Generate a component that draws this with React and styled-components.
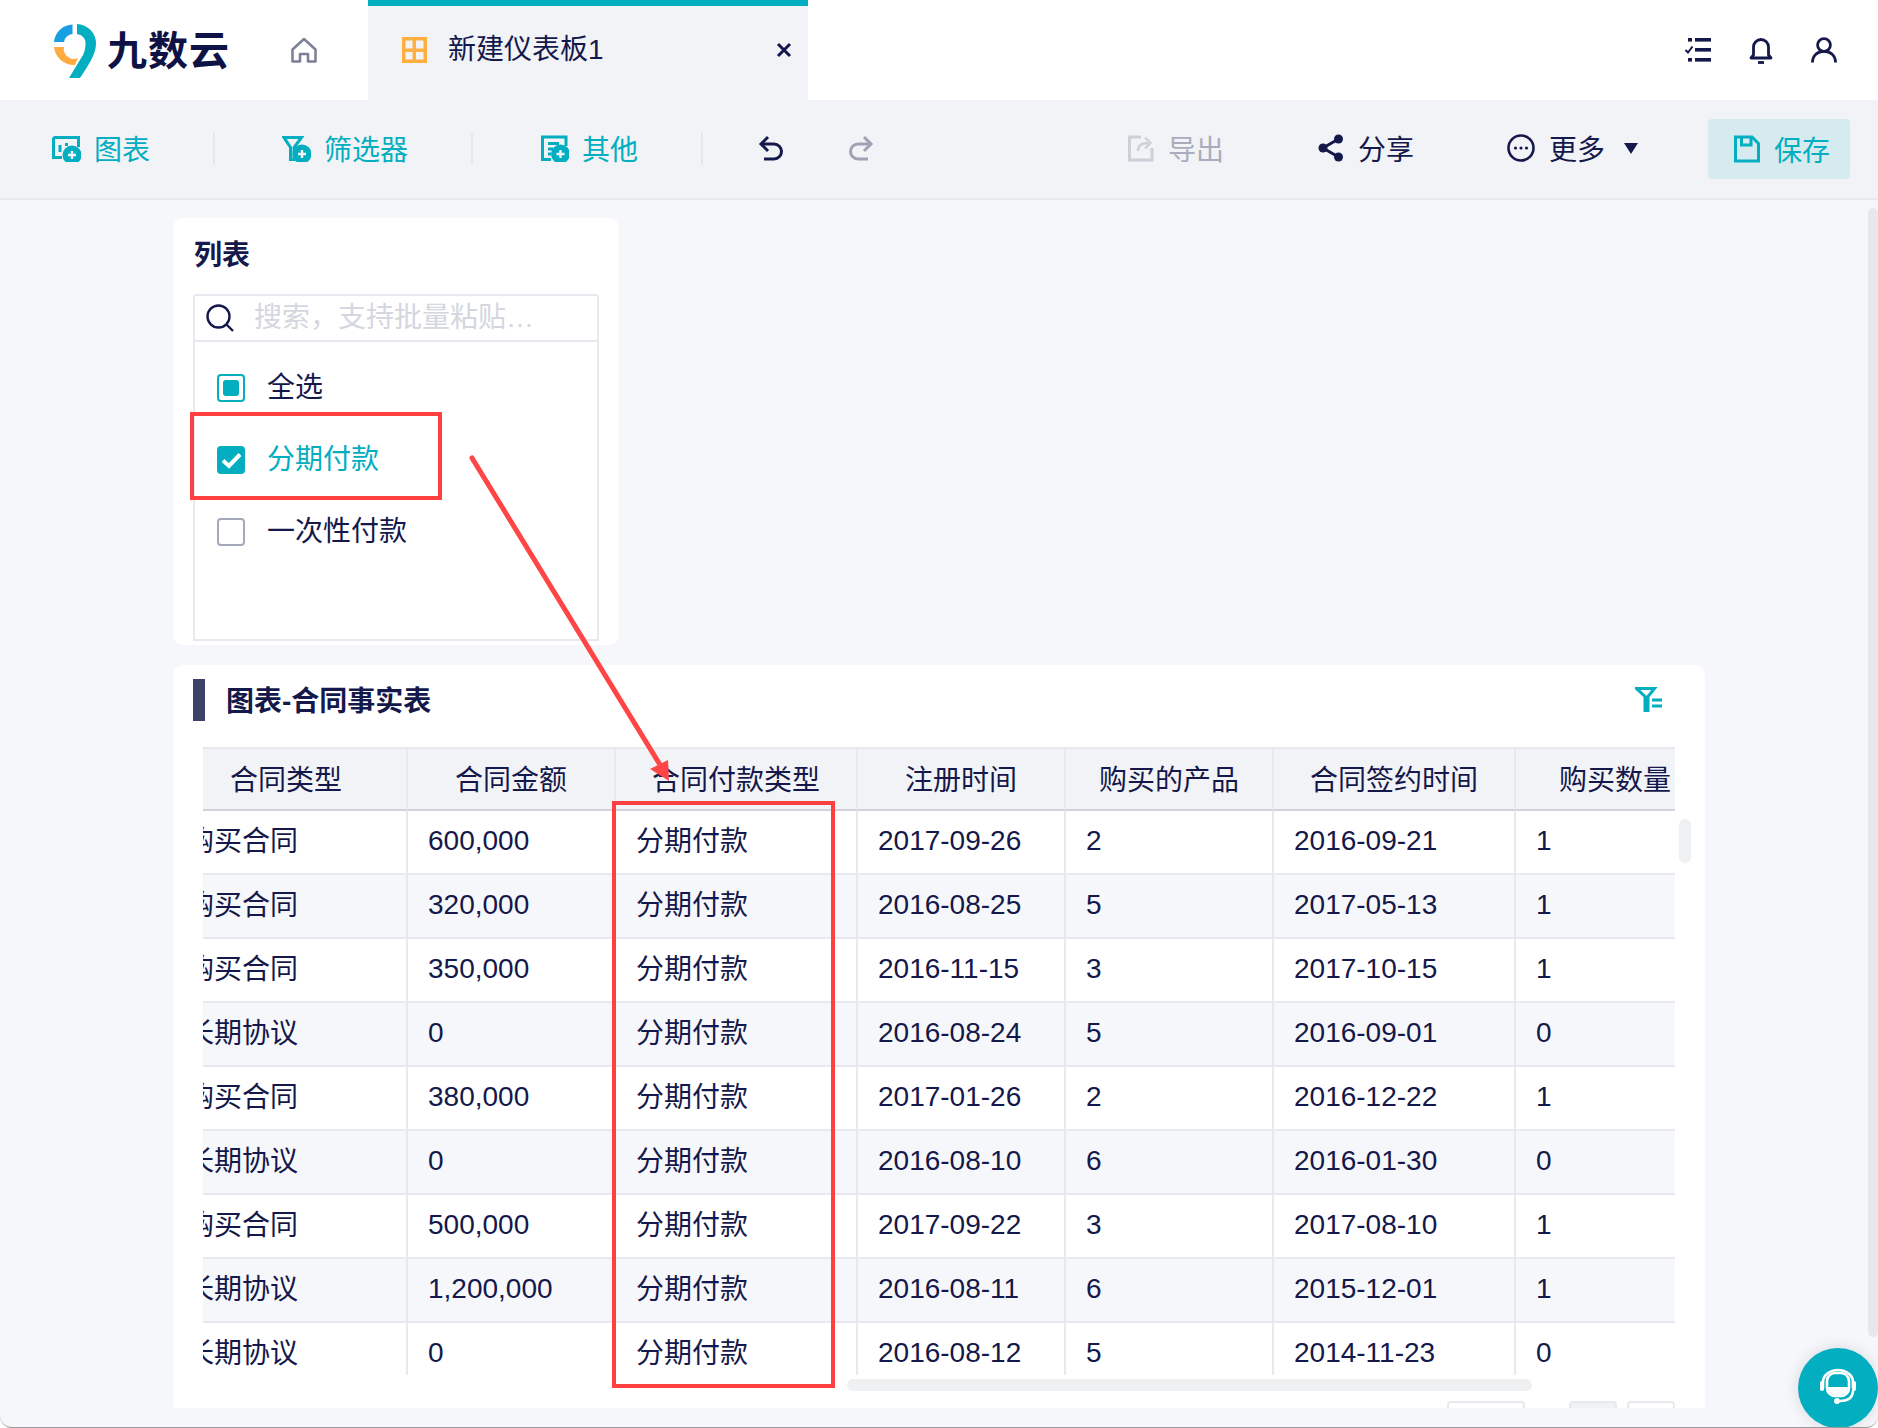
import React from "react";
import styled, { createGlobalStyle } from "styled-components";

const NAVY = "#14184a";
const TEAL = "#02aec0";
const LINE = "#e8e9ee";

const rows = [
  ["购买合同", "600,000", "2017-09-26", "2", "2016-09-21", "1"],
  ["购买合同", "320,000", "2016-08-25", "5", "2017-05-13", "1"],
  ["购买合同", "350,000", "2016-11-15", "3", "2017-10-15", "1"],
  ["长期协议", "0", "2016-08-24", "5", "2016-09-01", "0"],
  ["购买合同", "380,000", "2017-01-26", "2", "2016-12-22", "1"],
  ["长期协议", "0", "2016-08-10", "6", "2016-01-30", "0"],
  ["购买合同", "500,000", "2017-09-22", "3", "2017-08-10", "1"],
  ["长期协议", "1,200,000", "2016-08-11", "6", "2015-12-01", "1"],
  ["长期协议", "0", "2016-08-12", "5", "2014-11-23", "0"],
];

const columns = [
  { title: "合同类型", width: 242 },
  { title: "合同金额", width: 208 },
  { title: "合同付款类型", width: 242 },
  { title: "注册时间", width: 208 },
  { title: "购买的产品", width: 208 },
  { title: "合同签约时间", width: 242 },
  { title: "购买数量", width: 200 },
];

const Plus = ({ cx, cy }) => (
  <>
    <circle cx={cx} cy={cy} r="8" fill="currentColor" />
    <path d={`M${cx - 4} ${cy}H${cx + 4}M${cx} ${cy - 4}V${cy + 4}`} stroke="#f2f3f7" strokeWidth="2.4" fill="none" />
  </>
);

const ChartIcon = () => (
  <svg width="29" height="28" viewBox="0 0 29 28" fill="none" stroke="currentColor" strokeWidth="3">
    <path d="M1.5 3.5H26.5V13M1.5 3.5V23.5H10" />
    <path d="M8 11V18M14.5 9V12" />
    <Plus cx={20} cy={21} />
  </svg>
);

const FilterIcon = () => (
  <svg width="29" height="28" viewBox="0 0 29 28" fill="none" stroke="currentColor" strokeWidth="3">
    <path d="M2 3.5H19.5L12 13.5V25.5H8.5V13.5Z" />
    <Plus cx={20} cy={20} />
  </svg>
);

const OtherIcon = () => (
  <svg width="28" height="28" viewBox="0 0 28 28" fill="none" stroke="currentColor" strokeWidth="3">
    <path d="M25 12V3H1.5V25.5H10" />
    <path d="M7 9.5H18M7 15H12M7 20H10" />
    <Plus cx={19.5} cy={20} />
  </svg>
);

const UndoIcon = () => (
  <svg width="26" height="28" viewBox="0 0 26 28" fill="none" stroke="currentColor" strokeWidth="3">
    <path d="M10 3L3 10L10 17" />
    <path d="M3 10H16A7.5 7.5 0 0 1 16 25H6" />
  </svg>
);

const RedoIcon = () => (
  <svg width="26" height="28" viewBox="0 0 26 28" fill="none" stroke="currentColor" strokeWidth="3">
    <path d="M16 3L23 10L16 17" />
    <path d="M23 10H10A7.5 7.5 0 0 0 10 25H20" />
  </svg>
);

const ExportIcon = () => (
  <svg width="26" height="28" viewBox="0 0 26 28" fill="none" stroke="currentColor" strokeWidth="3">
    <path d="M13 3H1.5V26H24V14" />
    <path d="M10 17C10 12 13 9 20 9M17 3.5L22.5 9L17 14.5" strokeWidth="2.4" />
  </svg>
);

const ShareIcon = () => (
  <svg width="26" height="28" viewBox="0 0 26 28" fill="currentColor">
    <circle cx="20.5" cy="5" r="4.5" />
    <circle cx="5" cy="14" r="4.5" />
    <circle cx="20.5" cy="23" r="4.5" />
    <path d="M20.5 5L5 14L20.5 23" fill="none" stroke="currentColor" strokeWidth="3" />
  </svg>
);

const MoreIcon = () => (
  <svg width="28" height="28" viewBox="0 0 28 28" fill="currentColor">
    <circle cx="14" cy="14" r="12.5" fill="none" stroke="currentColor" strokeWidth="2.6" />
    <circle cx="8.5" cy="14" r="1.6" />
    <circle cx="14" cy="14" r="1.6" />
    <circle cx="19.5" cy="14" r="1.6" />
  </svg>
);

const SaveIcon = () => (
  <svg width="26" height="28" viewBox="0 0 26 28" fill="none" stroke="currentColor" strokeWidth="3">
    <path d="M1.5 2H18L24.5 8.5V26H1.5Z" />
    <path d="M7.5 2V10H17V2" />
  </svg>
);

const HomeIcon = () => (
  <svg width="26" height="26" viewBox="0 0 26 26" fill="none" stroke="currentColor" strokeWidth="2.6">
    <path d="M13 2L1.5 12.5V24.5H9V17H17V24.5H24.5V12.5Z" strokeLinejoin="round" />
  </svg>
);

const BoardIcon = () => (
  <svg width="25" height="26" viewBox="0 0 25 26" fill="#ffae40">
    <path fillRule="evenodd" d="M0 0H25V26H0ZM3.5 3.5V11.5H10.5V3.5ZM14 3.5V11.5H21.5V3.5ZM3.5 15V22.5H10.5V15ZM14 15V22.5H21.5V15Z" />
  </svg>
);

const CloseIcon = () => (
  <svg width="16" height="16" viewBox="0 0 16 16" fill="none" stroke="currentColor" strokeWidth="3">
    <path d="M2 2L14 14M14 2L2 14" />
  </svg>
);

const ChecklistIcon = () => (
  <svg width="26" height="26" viewBox="0 0 26 26" fill="currentColor">
    <rect x="3" y="1" width="4" height="3.6" />
    <rect x="3" y="21" width="4" height="3.6" />
    <rect x="10" y="1" width="16" height="3.6" />
    <rect x="10" y="11" width="16" height="3.6" />
    <rect x="10" y="21" width="16" height="3.6" />
    <path d="M0.5 13L3 15.5L7.5 9.5" fill="none" stroke="currentColor" strokeWidth="2" />
  </svg>
);

const BellIcon = () => (
  <svg width="24" height="28" viewBox="0 0 24 28" fill="none" stroke="currentColor" strokeWidth="2.8">
    <path d="M4.5 19V11A7.5 7.5 0 0 1 19.5 11V19L22 22H2Z" strokeLinejoin="round" />
    <path d="M9 26.5H15" />
  </svg>
);

const UserIcon = () => (
  <svg width="26" height="26" viewBox="0 0 26 26" fill="none" stroke="currentColor" strokeWidth="2.8">
    <circle cx="13" cy="8" r="6.4" />
    <path d="M1.5 25.5C1.5 18.5 6.5 14.4 13 14.4S24.5 18.5 24.5 25.5" />
  </svg>
);

const SearchIcon = () => (
  <svg width="28" height="28" viewBox="0 0 28 28" fill="none" stroke={NAVY} strokeWidth="2.4">
    <circle cx="12.5" cy="12.5" r="11" />
    <path d="M20.5 20.5L27 27" />
  </svg>
);

const TableFilterIcon = () => (
  <svg width="27" height="25" viewBox="0 0 27 25" fill="none" stroke={TEAL} strokeWidth="3">
    <path d="M1.5 1.5H19.5L13 9.5V24H10V9.5Z" />
    <path d="M17 13H27M17 19H27" />
  </svg>
);

const Headset = () => (
  <svg width="40" height="40" viewBox="0 0 40 40" fill="none" stroke="#fff" strokeWidth="2.6">
    <rect x="9" y="5" width="22" height="23" rx="8" />
    <path d="M10 19H30C30 24 27 27 22 27H18C13 27 10 24 10 19Z" fill="#fff" stroke="none" />
    <path d="M5 20V14A15 12 0 0 1 35 14V20" />
    <rect x="2" y="13" width="4" height="10" rx="2" fill="#fff" stroke="none" />
    <rect x="34" y="13" width="4" height="10" rx="2" fill="#fff" stroke="none" />
    <path d="M35 22C35 29 31 33 22 33" />
    <circle cx="19" cy="33" r="3" fill="#fff" stroke="none" />
  </svg>
);

const App = () => (
  <Page>
    <GlobalStyle />
    <TopBar>
      <Logo>
        <svg width="42" height="54" viewBox="0 0 42 54">
          <path d="M18.5 0.5A19 19 0 0 0 0 18H10A9 9 0 0 1 18.5 10Z" fill="#189ee2" />
          <path d="M0 23A20 20 0 0 0 21 41L24 34A10 10 0 0 1 10 23Z" fill="#ffab40" />
          <path d="M23 0A19.5 19.5 0 0 1 42 20C42 30 34 42 26 54H15L29 31C30.5 28 31.5 24 31.5 20A9 9 0 0 0 23 10Z" fill={TEAL} />
        </svg>
        <LogoText>九数云</LogoText>
      </Logo>
      <HomeLink>
        <HomeIcon />
      </HomeLink>
      <Tab>
        <BoardIcon />
        <TabTitle>新建仪表板1</TabTitle>
        <CloseIcon />
      </Tab>
      <TopActions>
        <ChecklistIcon />
        <BellIcon />
        <UserIcon />
      </TopActions>
    </TopBar>

    <Toolbar>
      <ToolButton $color={TEAL}>
        <ChartIcon />
        图表
      </ToolButton>
      <Divider />
      <ToolButton $color={TEAL}>
        <FilterIcon />
        筛选器
      </ToolButton>
      <Divider $after={68} />
      <ToolButton $color={TEAL}>
        <OtherIcon />
        其他
      </ToolButton>
      <Divider $after={55} />
      <ToolButton $color={NAVY}>
        <UndoIcon />
      </ToolButton>
      <ToolButton $color="#9ea2b5" $offset={64}>
        <RedoIcon />
      </ToolButton>
      <RightTools>
        <ToolButton $color="#a9acbc" $iconColor="#cdcfd9" $gap={14}>
          <ExportIcon />
          导出
        </ToolButton>
        <ToolButton $color={NAVY} $offset={94} $gap={14}>
          <ShareIcon />
          分享
        </ToolButton>
        <ToolButton $color={NAVY} $offset={93} $gap={14}>
          <MoreIcon />
          更多
          <Caret />
        </ToolButton>
        <SaveButton>
          <SaveIcon />
          保存
        </SaveButton>
      </RightTools>
    </Toolbar>

    <Canvas>
      <ListCard>
        <ListTitle>列表</ListTitle>
        <ListBox>
          <SearchRow>
            <SearchIcon />
            <Placeholder>搜索，支持批量粘贴…</Placeholder>
          </SearchRow>
          <Options>
            <Option>
              <Check $state="partial" />
              全选
            </Option>
            <Option $active>
              <Check $state="checked">
                <svg width="21" height="17" viewBox="0 0 21 17" fill="none" stroke="#fff" strokeWidth="4">
                  <path d="M2 8.5L8 14L19 2.5" />
                </svg>
              </Check>
              分期付款
            </Option>
            <Option>
              <Check />
              一次性付款
            </Option>
          </Options>
        </ListBox>
      </ListCard>

      <TableCard>
        <CardHead>
          <TitleBar />
          <CardTitle>图表-合同事实表</CardTitle>
          <FilterSlot>
            <TableFilterIcon />
          </FilterSlot>
        </CardHead>
        <TableClip>
          <DataTable>
            <colgroup>
              {columns.map(col => (
                <col key={col.title} style={{ width: col.width }} />
              ))}
            </colgroup>
            <thead>
              <tr>
                {columns.map(col => (
                  <HeadCell key={col.title}>{col.title}</HeadCell>
                ))}
              </tr>
            </thead>
            <tbody>
              {rows.map((row, i) => (
                <tr key={i}>
                  <BodyCell $striped={i % 2 === 1} $cjk>
                    {row[0]}
                  </BodyCell>
                  <BodyCell $striped={i % 2 === 1}>{row[1]}</BodyCell>
                  <BodyCell $striped={i % 2 === 1} $cjk>
                    分期付款
                  </BodyCell>
                  {row.slice(2).map((value, j) => (
                    <BodyCell key={j} $striped={i % 2 === 1}>
                      {value}
                    </BodyCell>
                  ))}
                </tr>
              ))}
            </tbody>
          </DataTable>
        </TableClip>
        <HScrollThumb />
        <VScrollThumb />
        <Pagination>
          <PageBox $width={78} />
          <PageBox $width={48} $filled $offset={44} />
          <PageBox $width={48} $offset={10} />
        </Pagination>
      </TableCard>
      <PageScrollThumb />
    </Canvas>

    <RedFrame $x={190} $y={412} $w={252} $h={88} />
    <RedFrame $x={612} $y={801} $w={223} $h={587} />
    <Arrow width="1878" height="1428" viewBox="0 0 1878 1428">
      <path d="M472 458L662 768" stroke="#ff4545" strokeWidth="5" strokeLinecap="round" fill="none" />
      <path d="M650 769L668 760L669 781Z" fill="#ff4545" />
    </Arrow>
    <ChatButton>
      <Headset />
    </ChatButton>
  </Page>
);

export default App;

const GlobalStyle = createGlobalStyle`
  html, body {
    margin: 0;
    padding: 0;
    background: #fff;
  }
  * {
    box-sizing: border-box;
  }
`;

const Page = styled.div`
  position: relative;
  width: 1878px;
  height: 1428px;
  overflow: hidden;
  display: flex;
  flex-direction: column;
  background: #f6f7fa;
  border-bottom: 1px solid #9a9a9a;
  border-radius: 0 0 12px 12px;
  color: ${NAVY};
  font-family: "Liberation Sans", "Noto Sans CJK SC", sans-serif;
  font-size: 28px;
`;

const TopBar = styled.header`
  flex: none;
  height: 100px;
  display: flex;
  align-items: center;
  background: #fff;
`;

const Logo = styled.div`
  display: flex;
  align-items: center;
  gap: 11px;
  width: 291px;
  height: 100%;
  padding: 2px 0 0 54px;
`;

const LogoText = styled.span`
  font-size: 40px;
  font-weight: 700;
  line-height: 40px;
  letter-spacing: 1px;
  color: #0e1244;
`;

const HomeLink = styled.div`
  width: 77px;
  display: flex;
  color: #7b8198;
`;

const Tab = styled.div`
  width: 440px;
  height: 100%;
  display: flex;
  align-items: center;
  padding: 0 16px 6px 34px;
  background: #f2f3f7;
  border-top: 6px solid ${TEAL};
`;

const TabTitle = styled.span`
  flex: 1;
  margin-left: 21px;
  line-height: 40px;
`;

const TopActions = styled.div`
  margin-left: auto;
  padding-right: 41px;
  display: flex;
  align-items: center;
  gap: 38px;
  color: ${NAVY};
`;

const Toolbar = styled.div`
  flex: none;
  height: 100px;
  display: flex;
  align-items: center;
  padding: 0 28px 0 52px;
  background: #f2f3f7;
  border-bottom: 2px solid #e8e9ec;
`;

const ToolButton = styled.div`
  display: flex;
  align-items: center;
  gap: ${p => p.$gap || 13}px;
  margin-left: ${p => p.$offset || 0}px;
  padding-bottom: 2px;
  color: ${p => p.$color};
  white-space: nowrap;

  svg {
    color: ${p => p.$iconColor || p.$color};
  }
`;

const Divider = styled.span`
  width: 2px;
  height: 32px;
  background: #e6e7ec;
  margin: 0 ${p => p.$after || 67}px 0 63px;
`;

const RightTools = styled.div`
  margin-left: auto;
  display: flex;
  align-items: center;
`;

const Caret = styled.span`
  width: 0;
  height: 0;
  margin-left: 5px;
  border-left: 7.5px solid transparent;
  border-right: 7.5px solid transparent;
  border-top: 11px solid ${NAVY};
`;

const SaveButton = styled.div`
  width: 142px;
  height: 60px;
  margin-left: 70px;
  padding-left: 26px;
  display: flex;
  align-items: center;
  gap: 14px;
  border-radius: 4px;
  background: #d6ebef;
  color: ${TEAL};
`;

const Canvas = styled.main`
  position: relative;
  flex: 1;
  min-height: 0;
  display: flex;
  flex-direction: column;
  gap: 20px;
  padding: 18px 173px 19px;
`;

const Card = styled.section`
  background: #fff;
  border-radius: 10px;
`;

const ListCard = styled(Card)`
  flex: none;
  width: 446px;
  height: 427px;
  padding: 20px 20px 0;
`;

const ListTitle = styled.h3`
  margin: 0 0 20px 1px;
  font-size: 28px;
  font-weight: 700;
  line-height: 36px;
`;

const ListBox = styled.div`
  height: 347px;
  border: 2px solid ${LINE};
  border-radius: 3px 3px 0 0;
`;

const SearchRow = styled.div`
  height: 46px;
  display: flex;
  align-items: center;
  gap: 20px;
  padding-left: 11px;
  border-bottom: 2px solid ${LINE};
`;

const Placeholder = styled.span`
  color: #d4d6e0;
  line-height: 40px;
`;

const Options = styled.div`
  padding: 10px 0 0 22px;
`;

const Option = styled.div`
  height: 72px;
  display: flex;
  align-items: center;
  gap: 22px;
  line-height: 40px;
  color: ${p => (p.$active ? TEAL : NAVY)};
`;

const Check = styled.span`
  width: 28px;
  height: 28px;
  flex: none;
  display: flex;
  align-items: center;
  justify-content: center;
  border-radius: 4px;
  border: 2px solid
    ${p => (p.$state === "checked" || p.$state === "partial" ? TEAL : "#a5a8b8")};
  background: ${p => (p.$state === "checked" ? TEAL : "#fff")};

  &::after {
    content: "";
    display: ${p => (p.$state === "partial" ? "block" : "none")};
    width: 16px;
    height: 16px;
    border-radius: 3px;
    background: ${TEAL};
  }
`;

const TableCard = styled(Card)`
  position: relative;
  flex: 1;
  min-height: 0;
  overflow: hidden;
  border-radius: 10px 10px 0 0;
  padding: 0 30px;
`;

const CardHead = styled.div`
  height: 82px;
  display: flex;
  align-items: center;
  padding: 0 0 8px;
  margin-left: -10px;
`;

const TitleBar = styled.span`
  width: 12px;
  height: 42px;
  margin: 0 21px 4px 0;
  background: #3c4168;
`;

const CardTitle = styled.h3`
  flex: 1;
  margin: 0;
  font-size: 28px;
  font-weight: 700;
  line-height: 40px;
`;

const FilterSlot = styled.span`
  display: flex;
  margin: 0 13px 6px 0;
`;

const TableClip = styled.div`
  height: 628px;
  overflow: hidden;
`;

const DataTable = styled.table`
  width: 1550px;
  margin-left: -37px;
  table-layout: fixed;
  border-collapse: separate;
  border-spacing: 0;
`;

const HeadCell = styled.th`
  height: 64px;
  padding: 0 0 2px;
  font-weight: 400;
  text-align: center;
  white-space: nowrap;
  background: #f2f3f7;
  border-top: 2px solid ${LINE};
  border-bottom: 2px solid #d2d4dd;
  border-right: 2px solid ${LINE};
`;

const BodyCell = styled.td`
  height: 64px;
  padding: 0 0 ${p => (p.$cjk ? 0 : 2)}px 20px;
  white-space: nowrap;
  line-height: ${p => (p.$cjk ? "40px" : "normal")};
  background: ${p => (p.$striped ? "#f6f7fa" : "#fff")};
  border-bottom: 2px solid ${LINE};
  border-right: 2px solid ${LINE};
`;

const HScrollThumb = styled.div`
  width: 685px;
  height: 12px;
  margin: 4px 0 0 644px;
  border-radius: 6px;
  background: #eff0f2;
`;

const VScrollThumb = styled.span`
  position: absolute;
  top: 154px;
  right: 14px;
  width: 12px;
  height: 44px;
  border-radius: 6px;
  background: #eff0f2;
`;

const Pagination = styled.div`
  display: flex;
  justify-content: flex-end;
  margin-top: 10px;
`;

const PageBox = styled.span`
  width: ${p => p.$width}px;
  height: 40px;
  margin-left: ${p => p.$offset || 0}px;
  border: 2px solid ${LINE};
  border-radius: 4px;
  background: ${p => (p.$filled ? "#f0f1f4" : "#fff")};
`;

const PageScrollThumb = styled.span`
  position: absolute;
  top: 8px;
  right: 0;
  width: 10px;
  height: 1129px;
  border-radius: 5px;
  background: #e7e8ec;
`;

const RedFrame = styled.div`
  position: absolute;
  left: ${p => p.$x}px;
  top: ${p => p.$y}px;
  width: ${p => p.$w}px;
  height: ${p => p.$h}px;
  border: 4px solid #ff4040;
  pointer-events: none;
`;

const Arrow = styled.svg`
  position: absolute;
  left: 0;
  top: 0;
  pointer-events: none;
`;

const ChatButton = styled.div`
  position: absolute;
  left: 1798px;
  top: 1348px;
  width: 80px;
  height: 80px;
  display: flex;
  align-items: center;
  justify-content: center;
  border-radius: 50%;
  background: ${TEAL};
  box-shadow: 0 0 16px rgba(0, 0, 0, 0.12);
`;
